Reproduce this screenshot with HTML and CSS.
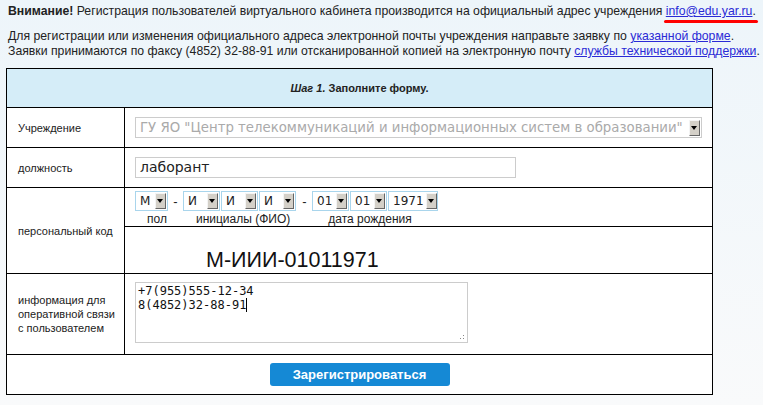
FILE: index.html
```html
<!DOCTYPE html>
<html lang="ru">
<head>
  <meta charset="UTF-8">
  <title>Регистрация</title>
  <link rel="stylesheet" href="styles.css">
</head>
<body>
<div class="notice">
  <p><b>Внимание!</b> Регистрация пользователей виртуального кабинета производится на официальный адрес учреждения <a href="#" class="mark">info@edu.yar.ru</a>.</p>
  <p class="second">Для регистрации или изменения официального адреса электронной почты учреждения направьте заявку по <a href="#">указанной форме</a>.<br>
  Заявки принимаются по факсу (4852) 32-88-91 или отсканированной копией на электронную почту <a href="#">службы технической поддержки</a>.</p>
</div>
<table class="form">
  <tr>
    <th colspan="2" class="head"><i>Шаг 1.</i> Заполните форму.</th>
  </tr>
  <tr class="row">
    <td class="label">Учреждение</td>
    <td><span class="sel wide disabled"><span class="val">ГУ ЯО "Центр телекоммуникаций и информационных систем в образовании"</span><span class="arrow"></span></span></td>
  </tr>
  <tr class="row">
    <td class="label">должность</td>
    <td><span class="input">лаборант</span></td>
  </tr>
  <tr>
    <td class="label" rowspan="2">персональный код</td>
    <td class="code-cell">
      <div class="code-sel">
        <span class="sel blue w-m"><span class="val">М</span><span class="arrow"></span></span>
        <span class="dash">-</span>
        <span class="sel blue w-i"><span class="val">И</span><span class="arrow"></span></span>
        <span class="sel blue w-i"><span class="val">И</span><span class="arrow"></span></span>
        <span class="sel blue w-i"><span class="val">И</span><span class="arrow"></span></span>
        <span class="dash">-</span>
        <span class="sel blue w-d"><span class="val">01</span><span class="arrow"></span></span>
        <span class="sel blue w-d"><span class="val">01</span><span class="arrow"></span></span>
        <span class="sel blue w-y"><span class="val">1971</span><span class="arrow"></span></span>
      </div>
      <div class="code-hints">
        <span class="h-sex">пол</span>
        <span class="h-fio">инициалы (ФИО)</span>
        <span class="h-date">дата рождения</span>
      </div>
    </td>
  </tr>
  <tr>
    <td class="code-result">М-ИИИ-01011971</td>
  </tr>
  <tr>
    <td class="label">информация для оперативной связи с пользователем</td>
    <td class="area-cell"><div class="area">+7(955)555-12-34
8(4852)32-88-91<span class="caret"></span><span class="grip"></span></div></td>
  </tr>
  <tr>
    <td colspan="2" class="submit-cell"><button type="button">Зарегистрироваться</button></td>
  </tr>
</table>
</body>
</html>
```

FILE: styles.css
```css
body {
  margin: 0;
  font-family: "Liberation Sans", Arial, sans-serif;
  font-size: 12.25px;
  color: #222;
  background: linear-gradient(to bottom, #edf5fa, #f9fafb);
  min-height: 405px;
}
.notice {
  padding: 4px 0 0 8px;
  line-height: 15px;
  white-space: nowrap;
}
.notice p {
  margin: 0;
}
.notice .second {
  margin-top: 10px;
}
a {
  color: #2a2ad6;
}
.mark {
  position: relative;
}
.mark::after {
  content: "";
  position: absolute;
  left: -2px;
  right: -6px;
  bottom: -5px;
  height: 3px;
  border-radius: 2px;
  background: #f00;
}
.form {
  margin: 9px 0 0 6px;
  width: 707px;
  border-collapse: collapse;
  border: 1px solid #000;
  background: #fff;
  font-size: 11px;
}
.form td, .form th {
  border: 1px solid #000;
  padding: 0;
}
.head {
  background: #d5edf8;
  height: 38px;
  font-weight: bold;
  font-size: 11px;
  text-align: center;
}
.row td {
  height: 39px;
}
.label {
  width: 100px;
  padding: 0 6px 0 11px !important;
  line-height: 14px;
  color: #222;
}
.form td + td, .code-cell, .code-result, .area-cell {
  padding-left: 10px;
}
.sel {
  display: inline-flex;
  align-items: center;
  height: 18px;
  border: 1px solid #ccc;
  background: #fff;
  font-family: "DejaVu Sans", sans-serif;
  font-size: 12px;
  color: #222;
  vertical-align: top;
}
.sel .val {
  flex: 1;
  padding-left: 4px;
  white-space: nowrap;
}
.sel .arrow {
  position: relative;
  flex: none;
  width: 9px;
  height: 14px;
  margin: 0 1px 0 2px;
  background: #d4d0c8;
  border: 1px solid;
  border-color: #f4f4f4 #666 #666 #f4f4f4;
}
.sel .arrow::after {
  content: "";
  position: absolute;
  left: 1px;
  top: 5px;
  border-left: 3px solid transparent;
  border-right: 3px solid transparent;
  border-top: 4px solid #000;
}
.wide {
  width: 565px;
  height: 19px;
  font-size: 13.3px;
}
.wide .val {
  overflow: hidden;
}
.disabled {
  color: #aaa;
}
.input {
  display: block;
  width: 375px;
  height: 19px;
  border: 1px solid #ccc;
  padding-left: 4px;
  font-family: "DejaVu Sans", sans-serif;
  font-size: 14px;
  line-height: 19px;
  color: #222;
}
.code-cell {
  height: 35px;
  vertical-align: top;
  padding-top: 3px !important;
}
.code-sel {
  display: flex;
  align-items: center;
}
.blue {
  border-color: #a9d5ec;
}
.w-m { width: 31px; }
.w-i { width: 35px; margin-right: 1px; }
.w-d { width: 35px; margin-right: 1px; }
.w-y { width: 48px; }
.dash {
  width: 15px;
  text-align: center;
  font-size: 13px;
}
.code-hints {
  display: flex;
  font-size: 12px;
  line-height: 14px;
  margin-top: 1px;
  color: #222;
}
.h-sex { margin-left: 12px; }
.h-fio { margin-left: 29px; }
.h-date { margin-left: 38px; }
.code-result {
  height: 25px;
  padding: 21px 0 0 81px !important;
  font-size: 21.5px;
  line-height: 24px;
  color: #111;
  vertical-align: top;
}
.area-cell {
  height: 80px;
}
.area {
  position: relative;
  width: 329px;
  height: 58px;
  margin-top: -3px;
  border: 1px solid #ccc;
  padding: 1px 0 0 2px;
  font-family: "DejaVu Sans Mono", monospace;
  font-size: 12px;
  line-height: 14px;
  white-space: pre;
  color: #111;
}
.caret {
  display: inline-block;
  width: 1px;
  height: 14px;
  background: #000;
  vertical-align: top;
}
.grip {
  position: absolute;
  right: 1px;
  bottom: 1px;
  width: 10px;
  height: 10px;
  background: radial-gradient(circle, #888 0.6px, transparent 0.8px) 0 0 / 3px 3px;
  clip-path: polygon(100% 0, 100% 100%, 0 100%);
}
.submit-cell {
  height: 39px;
  text-align: center;
  padding-left: 0 !important;
}
button {
  width: 180px;
  height: 23px;
  border: none;
  border-radius: 3px;
  background: #1589d5;
  color: #fff;
  font-family: "Liberation Sans", Arial, sans-serif;
  font-size: 13px;
  font-weight: bold;
}
```
